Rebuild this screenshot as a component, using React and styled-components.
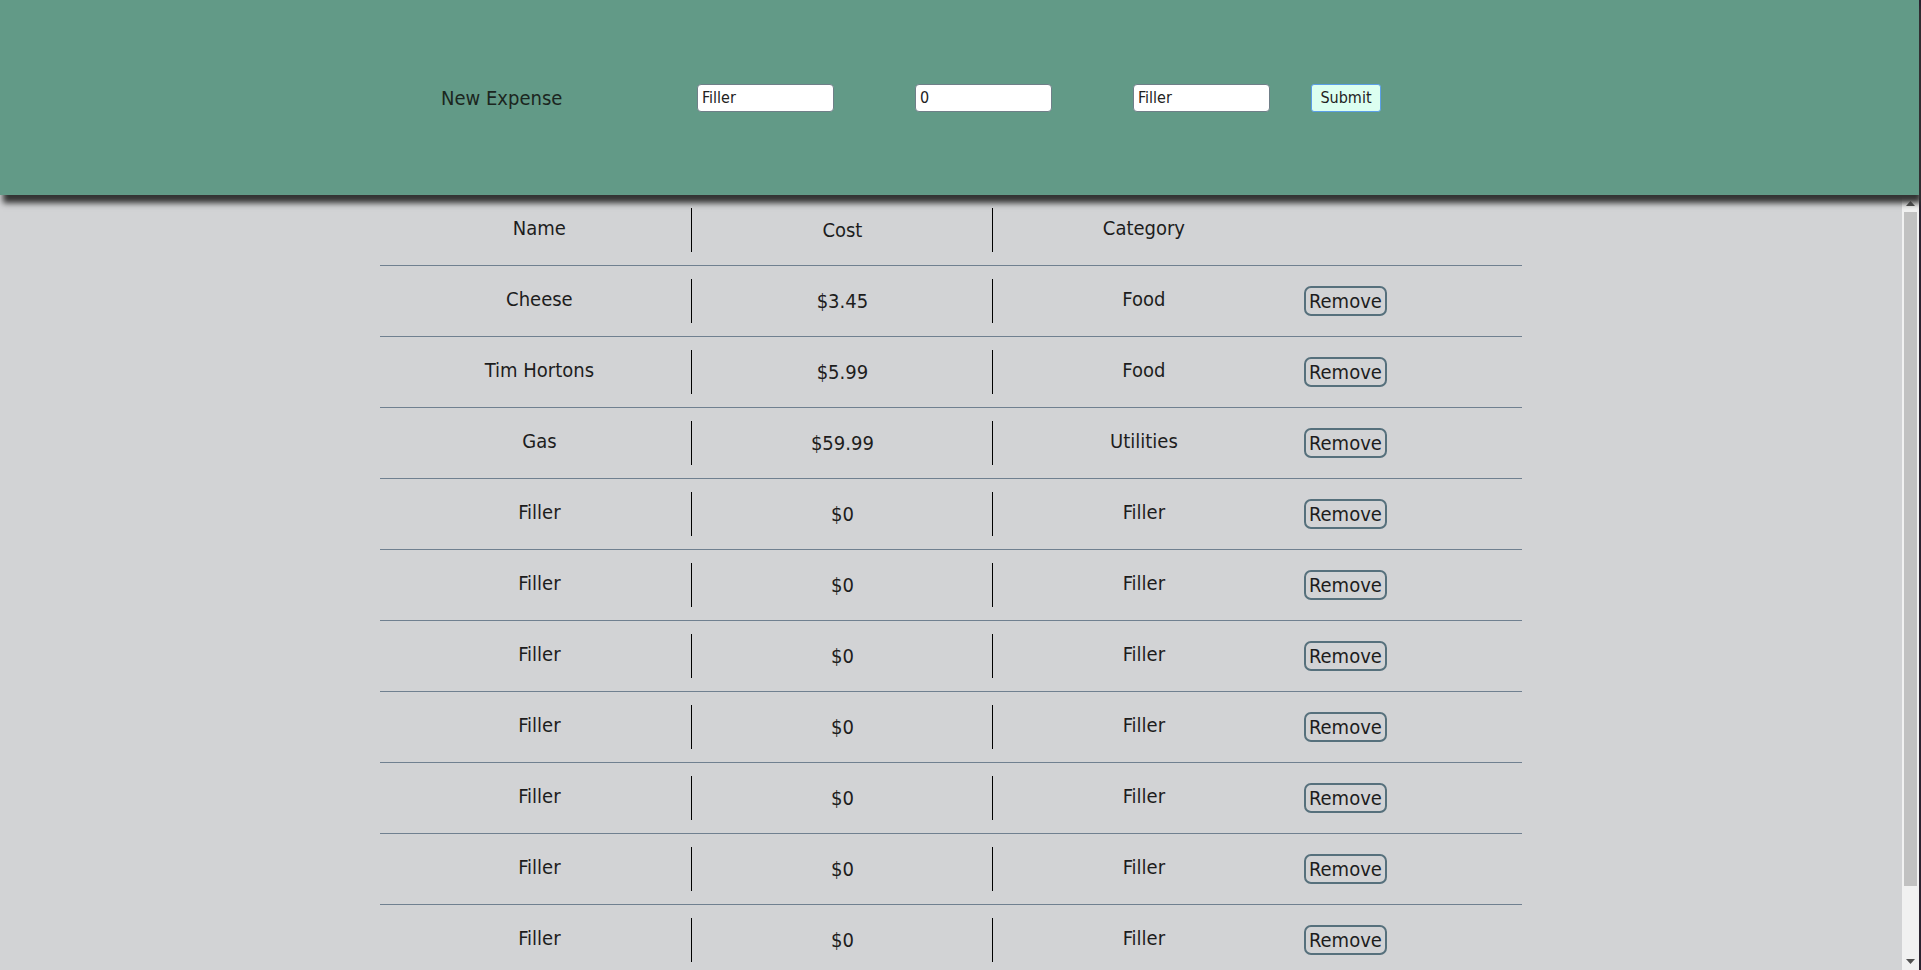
import React from "react";
import styled, { createGlobalStyle } from "styled-components";

const Global = createGlobalStyle`
  html, body { margin: 0; padding: 0; height: 100%; }
  body {
    background: #d2d3d5;
    font-family: "DejaVu Sans Condensed", "DejaVu Sans", sans-serif;
    color: #1d1d1d;
    overflow: hidden;
  }
  * { box-sizing: border-box; }
`;

const Page = styled.div`
  display: flex;
  flex-direction: column;
  height: 100vh;
  border-right: 2px solid #2a2230;
`;

const Header = styled.header`
  flex: 0 0 195px;
  background: #629a87;
  display: flex;
  align-items: center;
  padding-left: 441px;
  box-shadow: 3px 8px 6px #333;
  position: relative;
  z-index: 1;
`;

const Title = styled.div`
  width: 256px;
  font-size: 20px;
  color: #1b2620;
`;

const Field = styled.input`
  width: 137px;
  height: 28px;
  margin-right: ${(p) => p.$gap}px;
  border: 1px solid #6f7f88;
  border-radius: 4px;
  background: #fff;
  font-family: inherit;
  font-size: 16px;
  color: #222;
  padding: 0 4px;
  outline: none;
`;

const SubmitButton = styled.button`
  height: 28px;
  width: 70px;
  border: 1px solid #5b9fe8;
  border-radius: 3px;
  background: #dcfff0;
  font-family: inherit;
  font-size: 16px;
  color: #222;
  padding: 0;
`;

const Body = styled.div`
  flex: 1;
  min-height: 0;
  display: flex;
`;

const Scroller = styled.main`
  flex: 1;
  overflow-y: auto;
  scrollbar-width: none;
  &::-webkit-scrollbar { display: none; }
`;

const ScrollTrack = styled.div`
  flex: 0 0 17px;
  display: flex;
  flex-direction: column;
  background: #f1f1f1;
`;

const ScrollArrow = styled.div`
  flex: 0 0 17px;
  display: flex;
  align-items: center;
  justify-content: center;
`;

const ThumbLane = styled.div`
  flex: 1;
  padding: 0 2px;
`;

const Thumb = styled.div`
  height: ${(p) => p.$ratio * 100}%;
  background: #c1c1c1;
`;

const Table = styled.div`
  width: 60%;
  margin: 0 auto;
`;

const Row = styled.div`
  display: grid;
  grid-template-columns: 312px 301px 301px 102px 1fr;
  padding: 13px 0;
  border-bottom: 1px solid #708090;
`;

const Cell = styled.div`
  height: 44px;
  display: flex;
  align-items: center;
  justify-content: center;
  font-size: 20px;
  border-right: ${(p) => (p.$divider ? "1px solid #000" : "none")};
  padding-bottom: ${(p) => (p.$raised ? "4px" : "0")};
  padding-left: ${(p) => (p.$nudge ? "7px" : "0")};
`;

const RemoveButton = styled.button`
  height: 30px;
  padding: 0 3px;
  border: 2px solid #56707c;
  border-radius: 7px;
  background: transparent;
  font-family: inherit;
  font-size: 20px;
  line-height: 24px;
  color: #1d1d1d;
`;

const expenses = [
  { name: "Cheese", cost: "$3.45", category: "Food" },
  { name: "Tim Hortons", cost: "$5.99", category: "Food" },
  { name: "Gas", cost: "$59.99", category: "Utilities" },
  ...Array.from({ length: 8 }, () => ({ name: "Filler", cost: "$0", category: "Filler" })),
];

const Arrow = ({ down }) => (
  <svg width="9" height="5" viewBox="0 0 9 5">
    <polygon points={down ? "0,0 9,0 4.5,5" : "0,5 9,5 4.5,0"} fill="#505050" />
  </svg>
);

export default function App() {
  const visible = 775;
  const content = (expenses.length + 1) * 71;
  return (
    <Page>
      <Global />
      <Header>
        <Title>New Expense</Title>
        <Field defaultValue="Filler" $gap={81} />
        <Field defaultValue="0" $gap={81} />
        <Field defaultValue="Filler" $gap={41} />
        <SubmitButton>Submit</SubmitButton>
      </Header>
      <Body>
        <Scroller>
          <Table>
            <Row>
              <Cell $divider $raised $nudge>Name</Cell>
              <Cell $divider>Cost</Cell>
              <Cell $raised>Category</Cell>
              <Cell />
              <Cell />
            </Row>
            {expenses.map((e, i) => (
              <Row key={i}>
                <Cell $divider $raised $nudge>{e.name}</Cell>
                <Cell $divider>{e.cost}</Cell>
                <Cell $raised>{e.category}</Cell>
                <Cell>
                  <RemoveButton>Remove</RemoveButton>
                </Cell>
                <Cell />
              </Row>
            ))}
          </Table>
        </Scroller>
        <ScrollTrack>
          <ScrollArrow>
            <Arrow />
          </ScrollArrow>
          <ThumbLane>
            <Thumb $ratio={Math.min(1, visible / content)} />
          </ThumbLane>
          <ScrollArrow>
            <Arrow down />
          </ScrollArrow>
        </ScrollTrack>
      </Body>
    </Page>
  );
}
